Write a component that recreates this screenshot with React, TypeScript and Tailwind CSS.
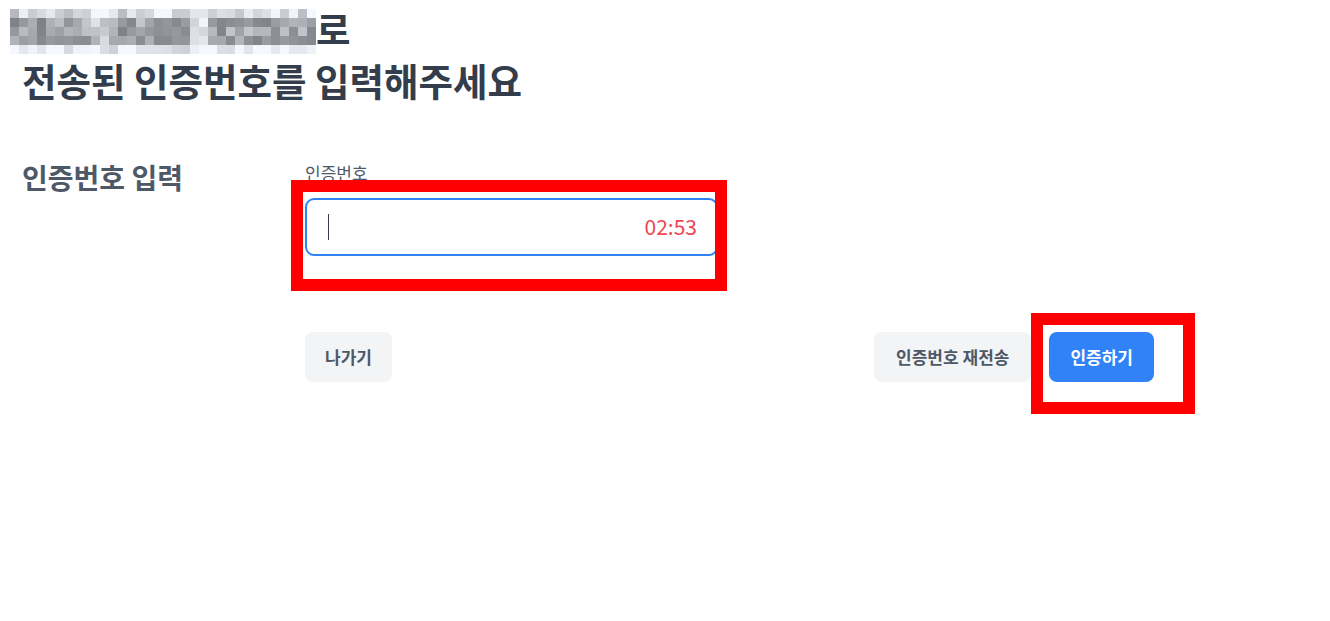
import React from "react"

const font = { fontFamily: '"Noto Sans CJK KR", "Noto Sans", sans-serif' }

// pixelated mosaic standing in for the masked phone number
function Mosaic() {
  const cols = 34
  const rows = 5
  const gaps = [9, 10, 20, 21]
  const cells: string[] = []
  for (let r = 0; r < rows; r++) {
    for (let c = 0; c < cols; c++) {
      const seed = Math.sin(r * 91.7 + c * 12.9) * 43758.5
      const rnd = seed - Math.floor(seed)
      let base = r === 0 ? 222 : r === rows - 1 ? 240 : 168
      if (gaps.includes(c)) base = r === 0 || r === rows - 1 ? 248 : 215
      const v = Math.round(Math.min(250, base + (rnd - 0.5) * 70))
      cells.push(`rgb(${v - 6},${v - 2},${v + 4})`)
    }
  }
  return (
    <div className="grid grid-cols-[repeat(34,9px)] grid-rows-[repeat(5,9px)]">
      {cells.map((c, i) => (
        <div key={i} style={{ backgroundColor: c }} />
      ))}
    </div>
  )
}

export default function App() {
  return (
    <div className="relative min-h-[621px] w-[1330px] bg-white" style={font}>
      <div className="pl-[22px] pt-[1px]">
        <h1 className="text-[37.5px] font-bold leading-[52px] text-[#333d4b]">
          <span className="flex items-center">
            <span className="-ml-[12px] mt-[8px]">
              <Mosaic />
            </span>
            <span>로</span>
          </span>
          <span className="block">전송된 인증번호를 입력해주세요</span>
        </h1>

        <div className="mt-[51px] flex">
          <div className="w-[283px] text-[28px] font-bold leading-[40px] text-[#4e5968]">인증번호 입력</div>
          <div className="w-[849px] pt-[4px]">
            <div className="text-[17px] leading-[24px] text-[#4e5968]">인증번호</div>
            <div className="mt-[13px] flex h-[58px] w-[413px] items-center justify-between rounded-[9px] border-2 border-[#3182f6] pl-[21px] pr-[19px]">
              <span className="h-[26px] w-px bg-[#333d4b]" />
              <span className="text-[21px] text-[#f04452]">02:53</span>
            </div>
            <div className="mt-[76px] flex items-center justify-between">
              <button className="h-[50px] rounded-[8px] bg-[#f2f4f6] px-[20px] text-[17px] font-bold text-[#4e5968]">나가기</button>
              <div className="flex gap-[18px]">
                <button className="h-[50px] rounded-[8px] bg-[#f2f4f6] px-[22px] text-[17px] font-bold text-[#4e5968]">인증번호 재전송</button>
                <button className="h-[50px] rounded-[8px] bg-[#3182f6] px-[21px] text-[17px] font-bold text-white">인증하기</button>
              </div>
            </div>
          </div>
        </div>
      </div>

      {/* annotation boxes */}
      <div className="absolute left-[291px] top-[180px] h-[111px] w-[436px] border-[12px] border-[#ff0000]" />
      <div className="absolute left-[1031px] top-[313px] h-[101px] w-[164px] border-[12px] border-[#ff0000]" />
    </div>
  )
}
